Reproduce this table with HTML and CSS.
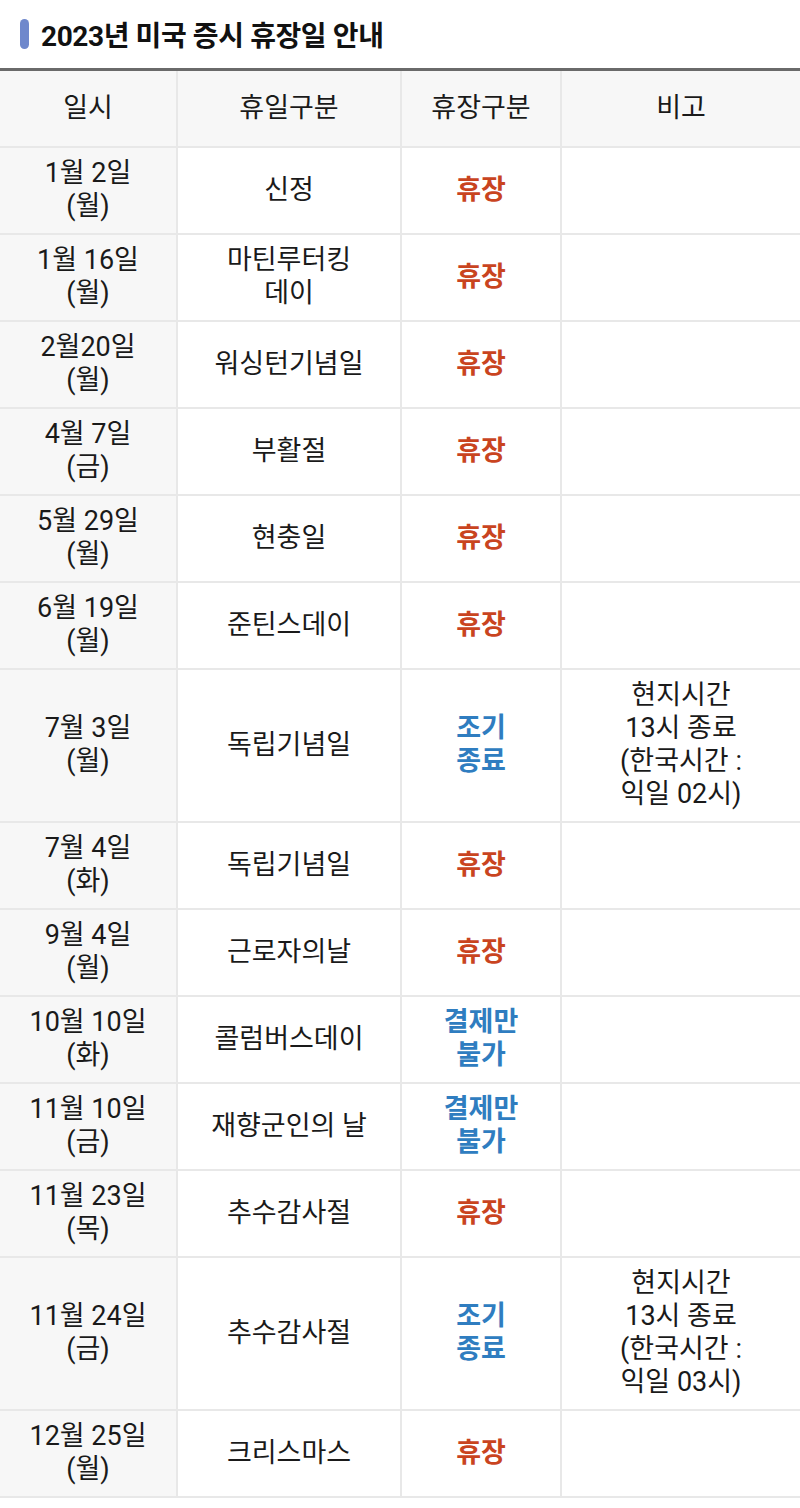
FILE: index.html
```html
<!DOCTYPE html>
<html lang="ko">
<head>
<meta charset="utf-8">
<link rel="stylesheet" href="styles.css">
</head>
<body>
<div class="title-bar">
  <span class="marker"></span>
  <h1 class="title">2023년 미국 증시 휴장일 안내</h1>
</div>
<table class="schedule">
  <colgroup>
    <col class="c-date"><col class="c-kind"><col class="c-type"><col class="c-note">
  </colgroup>
  <thead>
    <tr><th>일시</th><th>휴일구분</th><th>휴장구분</th><th>비고</th></tr>
  </thead>
  <tbody>
    <tr><td class="date">1월 2일<br>(월)</td><td>신정</td><td class="closed">휴장</td><td></td></tr>
    <tr><td class="date">1월 16일<br>(월)</td><td>마틴루터킹<br>데이</td><td class="closed">휴장</td><td></td></tr>
    <tr><td class="date">2월20일<br>(월)</td><td>워싱턴기념일</td><td class="closed">휴장</td><td></td></tr>
    <tr><td class="date">4월 7일<br>(금)</td><td>부활절</td><td class="closed">휴장</td><td></td></tr>
    <tr><td class="date">5월 29일<br>(월)</td><td>현충일</td><td class="closed">휴장</td><td></td></tr>
    <tr><td class="date">6월 19일<br>(월)</td><td>준틴스데이</td><td class="closed">휴장</td><td></td></tr>
    <tr><td class="date">7월 3일<br>(월)</td><td>독립기념일</td><td class="early">조기<br>종료</td><td>현지시간<br>13시 종료<br>(한국시간 :<br>익일 02시)</td></tr>
    <tr><td class="date">7월 4일<br>(화)</td><td>독립기념일</td><td class="closed">휴장</td><td></td></tr>
    <tr><td class="date">9월 4일<br>(월)</td><td>근로자의날</td><td class="closed">휴장</td><td></td></tr>
    <tr><td class="date">10월 10일<br>(화)</td><td>콜럼버스데이</td><td class="early">결제만<br>불가</td><td></td></tr>
    <tr><td class="date">11월 10일<br>(금)</td><td>재향군인의 날</td><td class="early">결제만<br>불가</td><td></td></tr>
    <tr><td class="date">11월 23일<br>(목)</td><td>추수감사절</td><td class="closed">휴장</td><td></td></tr>
    <tr><td class="date">11월 24일<br>(금)</td><td>추수감사절</td><td class="early">조기<br>종료</td><td>현지시간<br>13시 종료<br>(한국시간 :<br>익일 03시)</td></tr>
    <tr><td class="date">12월 25일<br>(월)</td><td>크리스마스</td><td class="closed">휴장</td><td></td></tr>
  </tbody>
</table>
</body>
</html>
```
FILE: styles.css
```css
html, body {
  margin: 0;
  padding: 0;
  background: #fff;
}
body {
  font-family: Roboto, "Noto Sans CJK KR", sans-serif;
  color: #1a1a1a;
}
.title-bar {
  display: flex;
  align-items: center;
  gap: 12px;
  padding-left: 20px;
  border-bottom: 3px solid #6a6a6a;
  box-sizing: border-box;
  height: 71px;
}
.marker {
  width: 9px;
  height: 30px;
  border-radius: 5px;
  background: #6f88cc;
}
.title {
  margin: 0;
  font-size: 28px;
  font-weight: 700;
  color: #111;
  letter-spacing: -0.4px;
}
.schedule {
  width: 800px;
  table-layout: fixed;
  border-collapse: collapse;
  font-size: 27px;
  line-height: 33px;
}
.c-date { width: 177px; }
.c-kind { width: 224px; }
.c-type { width: 160px; }
.c-note { width: 239px; }
.schedule th,
.schedule td {
  border: 2px solid #e8e8e8;
  text-align: center;
  vertical-align: middle;
  padding: 9px 2px 10px;
}
.schedule tr > :first-child { border-left: none; }
.schedule tr > :last-child { border-right: none; }
.schedule thead tr > th { border-top: none; }
.schedule th {
  font-weight: 400;
  background: #f7f7f7;
  padding: 21px 2px;
}
.schedule td.date {
  background: #f7f7f7;
}
.closed {
  color: #c9441f;
  font-weight: 700;
}
.early {
  color: #2f7dc0;
  font-weight: 700;
}
```
